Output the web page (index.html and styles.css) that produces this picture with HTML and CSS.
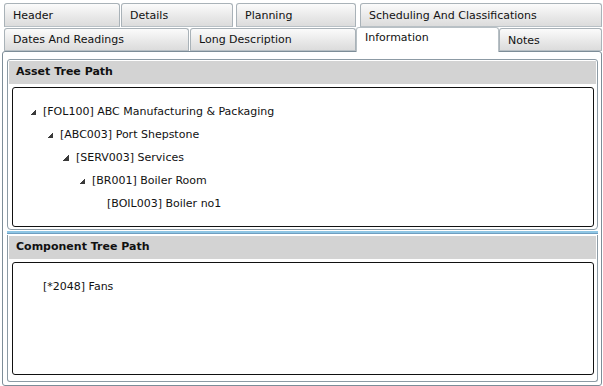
FILE: index.html
```html
<!DOCTYPE html>
<html>
<head>
<meta charset="utf-8">
<link rel="stylesheet" href="styles.css">
</head>
<body>
<div class="page">
  <div class="tabrow row1">
    <div class="tab t-header">Header</div>
    <div class="tab t-details">Details</div>
    <div class="tab t-planning">Planning</div>
    <div class="tab t-sched">Scheduling And Classifications</div>
  </div>
  <div class="tabrow row2">
    <div class="tab t-dates">Dates And Readings</div>
    <div class="tab t-long">Long Description</div>
    <div class="tab t-info active">Information</div>
    <div class="tab t-notes">Notes</div>
  </div>
  <div class="content">
    <div class="group asset">
      <div class="group-head">Asset Tree Path</div>
      <div class="tree-box">
        <div class="node lvl0"><span class="arrow"></span>[FOL100] ABC Manufacturing &amp; Packaging</div>
        <div class="node lvl1"><span class="arrow"></span>[ABC003] Port Shepstone</div>
        <div class="node lvl2"><span class="arrow"></span>[SERV003] Services</div>
        <div class="node lvl3"><span class="arrow"></span>[BR001] Boiler Room</div>
        <div class="node lvl4"><span class="noarrow"></span>[BOIL003] Boiler no1</div>
      </div>
    </div>
    <div class="splitter"></div>
    <div class="group component">
      <div class="group-head">Component Tree Path</div>
      <div class="tree-box comp-box">
        <div class="node lvl0"><span class="noarrow"></span>[*2048] Fans</div>
      </div>
    </div>
  </div>
</div>
</body>
</html>
```

FILE: styles.css
```css
html, body {
  margin: 0;
  padding: 0;
  background: #ffffff;
}
body {
  font-family: "DejaVu Sans", Verdana, sans-serif;
  font-size: 11px;
  color: #111;
}
.page {
  width: 603px;
  height: 386px;
  padding-top: 3px;
  box-sizing: border-box;
  position: relative;
}
.tabrow {
  display: flex;
  padding-left: 4px;
  align-items: flex-end;
}
.row1 {
  height: 24px;
}
.row2 {
  height: 24px;
  position: relative;
  z-index: 2;
}
.tab {
  box-sizing: border-box;
  height: 23px;
  border: 1px solid #a9b2b8;
  border-bottom-color: #b8c0c5;
  border-radius: 3px 3px 0 0;
  background: linear-gradient(#fbfbfb, #e9e9e9 55%, #dcdcdc);
  padding: 4px 0 0 8px;
  white-space: nowrap;
  line-height: 14px;
}
.row1 .tab { height: 24px; padding-top: 5px; }
.t-header { width: 116px; margin-right: 1px; }
.t-details { width: 112px; margin-right: 3px; }
.t-planning { width: 120px; margin-right: 4px; }
.t-sched { width: 242px; }
.t-dates { width: 185px; margin-right: 1px; }
.t-long { width: 166px; }
.t-info { width: 143px; }
.t-notes { width: 103px; padding-top: 5px; }
.tab.active {
  background: #ffffff;
  border-color: #b8c0c5;
  border-bottom: none;
  height: 25px;
  margin-bottom: -1px;
  padding-top: 3px;
}
.content {
  box-sizing: border-box;
  margin: 0 1px 0 2px;
  height: 335px;
  border: 1px solid #7d8d98;
  border-radius: 3px;
  padding: 7px 3px 3px 4px;
  display: flex;
  flex-direction: column;
}
.group {
  box-sizing: border-box;
  border: 1px solid #8c9aa4;
  border-radius: 3px;
  padding: 1px;
}
.asset {
  height: 171px;
  border-bottom-left-radius: 4px;
  border-bottom-right-radius: 4px;
}
.component {
  flex: 1;
  border-top: none;
  border-top-left-radius: 0;
  border-top-right-radius: 0;
}
.splitter {
  height: 2px;
  margin: 1px 0 1px 0;
  background: #8fc6e4;
  border-bottom: 1px solid #6e9ec0;
}
.group-head {
  background: #d3d3d3;
  height: 23px;
  line-height: 22px;
  padding-left: 7px;
  font-weight: bold;
  color: #111;
}
.tree-box {
  box-sizing: border-box;
  margin: 3px 2px 0 3px;
  height: 140px;
  border: 1px solid #111;
  border-radius: 3px;
  padding-top: 12px;
}
.comp-box {
  height: 113px;
  padding-top: 12px;
}
.node {
  height: 23px;
  line-height: 23px;
  display: flex;
  align-items: center;
  white-space: nowrap;
}
.arrow, .noarrow {
  display: inline-block;
  width: 6px;
  height: 6px;
  margin-right: 7px;
  flex: none;
}
.arrow {
  background: linear-gradient(to bottom right, transparent 50%, #3a3a3a 50%);
  margin-top: 1px;
}
.lvl0 { padding-left: 17px; }
.lvl1 { padding-left: 34px; }
.lvl2 { padding-left: 50px; }
.lvl3 { padding-left: 66px; }
.lvl4 { padding-left: 81px; }
```
